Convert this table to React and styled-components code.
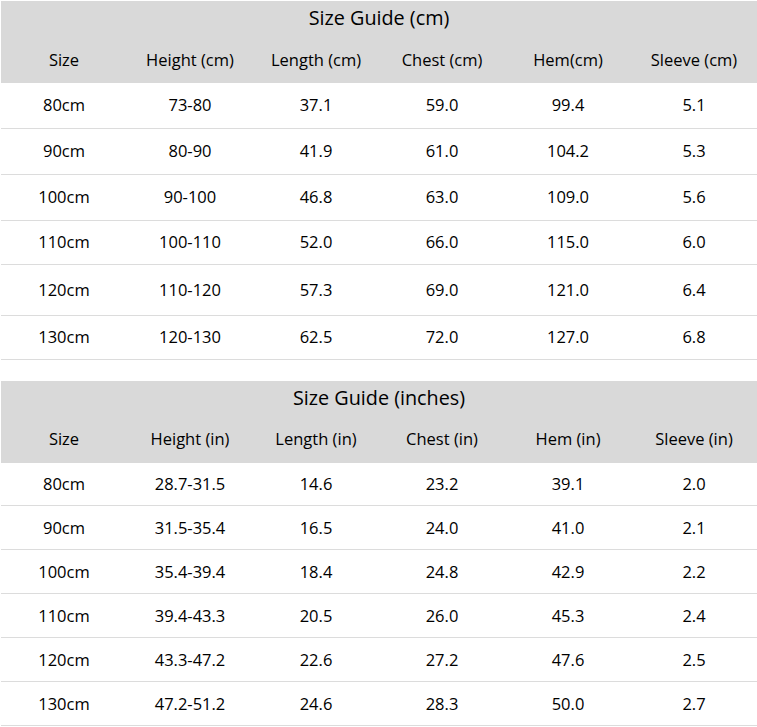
import styled, { createGlobalStyle } from "styled-components";

const GlobalStyle = createGlobalStyle`
  body {
    margin: 0;
    padding: 1px 0 0 1px;
    background: #fff;
    font-family: "Open Sans", "Noto Sans", sans-serif;
    color: #000;
  }
`;

const Page = styled.div`
  display: flex;
  flex-direction: column;
  gap: 21px;
  width: 756px;
`;

const Table = styled.table`
  width: 756px;
  border-collapse: collapse;
  table-layout: fixed;
`;

const TitleCell = styled.th`
  height: 34px;
  padding: 0 0 2px;
  background: #d9d9d9;
  font-size: 19.8px;
  line-height: 22px;
  font-weight: 400;
  text-align: center;
`;

const HeadCell = styled.th`
  height: 45px;
  padding: 0 0 1px;
  background: #d9d9d9;
  font-size: 16.5px;
  line-height: 20px;
  font-weight: 400;
  text-align: center;
`;

const Row = styled.tr`
  height: ${(p) => p.$h}px;
  border-bottom: 1px solid #dcdcdc;
`;

const Cell = styled.td`
  padding: 0;
  font-size: 16.5px;
  line-height: 20px;
  text-align: center;
`;

const cm = {
  title: "Size Guide (cm)",
  heads: ["Size", "Height (cm)", "Length (cm)", "Chest (cm)", "Hem(cm)", "Sleeve (cm)"],
  heights: [45, 46, 46, 44, 51, 44],
  rows: [
    ["80cm", "73-80", "37.1", "59.0", "99.4", "5.1"],
    ["90cm", "80-90", "41.9", "61.0", "104.2", "5.3"],
    ["100cm", "90-100", "46.8", "63.0", "109.0", "5.6"],
    ["110cm", "100-110", "52.0", "66.0", "115.0", "6.0"],
    ["120cm", "110-120", "57.3", "69.0", "121.0", "6.4"],
    ["130cm", "120-130", "62.5", "72.0", "127.0", "6.8"],
  ],
};

const inches = {
  title: "Size Guide (inches)",
  heads: ["Size", "Height (in)", "Length (in)", "Chest (in)", "Hem (in)", "Sleeve (in)"],
  heights: [43, 44, 44, 44, 44, 44],
  rows: [
    ["80cm", "28.7-31.5", "14.6", "23.2", "39.1", "2.0"],
    ["90cm", "31.5-35.4", "16.5", "24.0", "41.0", "2.1"],
    ["100cm", "35.4-39.4", "18.4", "24.8", "42.9", "2.2"],
    ["110cm", "39.4-43.3", "20.5", "26.0", "45.3", "2.4"],
    ["120cm", "43.3-47.2", "22.6", "27.2", "47.6", "2.5"],
    ["130cm", "47.2-51.2", "24.6", "28.3", "50.0", "2.7"],
  ],
};

function SizeTable({ data }) {
  return (
    <Table>
      <thead>
        <tr>
          <TitleCell colSpan={6}>{data.title}</TitleCell>
        </tr>
        <tr>
          {data.heads.map((h) => (
            <HeadCell key={h}>{h}</HeadCell>
          ))}
        </tr>
      </thead>
      <tbody>
        {data.rows.map((row, i) => (
          <Row key={row[0]} $h={data.heights[i]}>
            {row.map((v, j) => (
              <Cell key={j}>{v}</Cell>
            ))}
          </Row>
        ))}
      </tbody>
    </Table>
  );
}

export default function App() {
  return (
    <>
      <GlobalStyle />
      <Page>
        <SizeTable data={cm} />
        <SizeTable data={inches} />
      </Page>
    </>
  );
}
